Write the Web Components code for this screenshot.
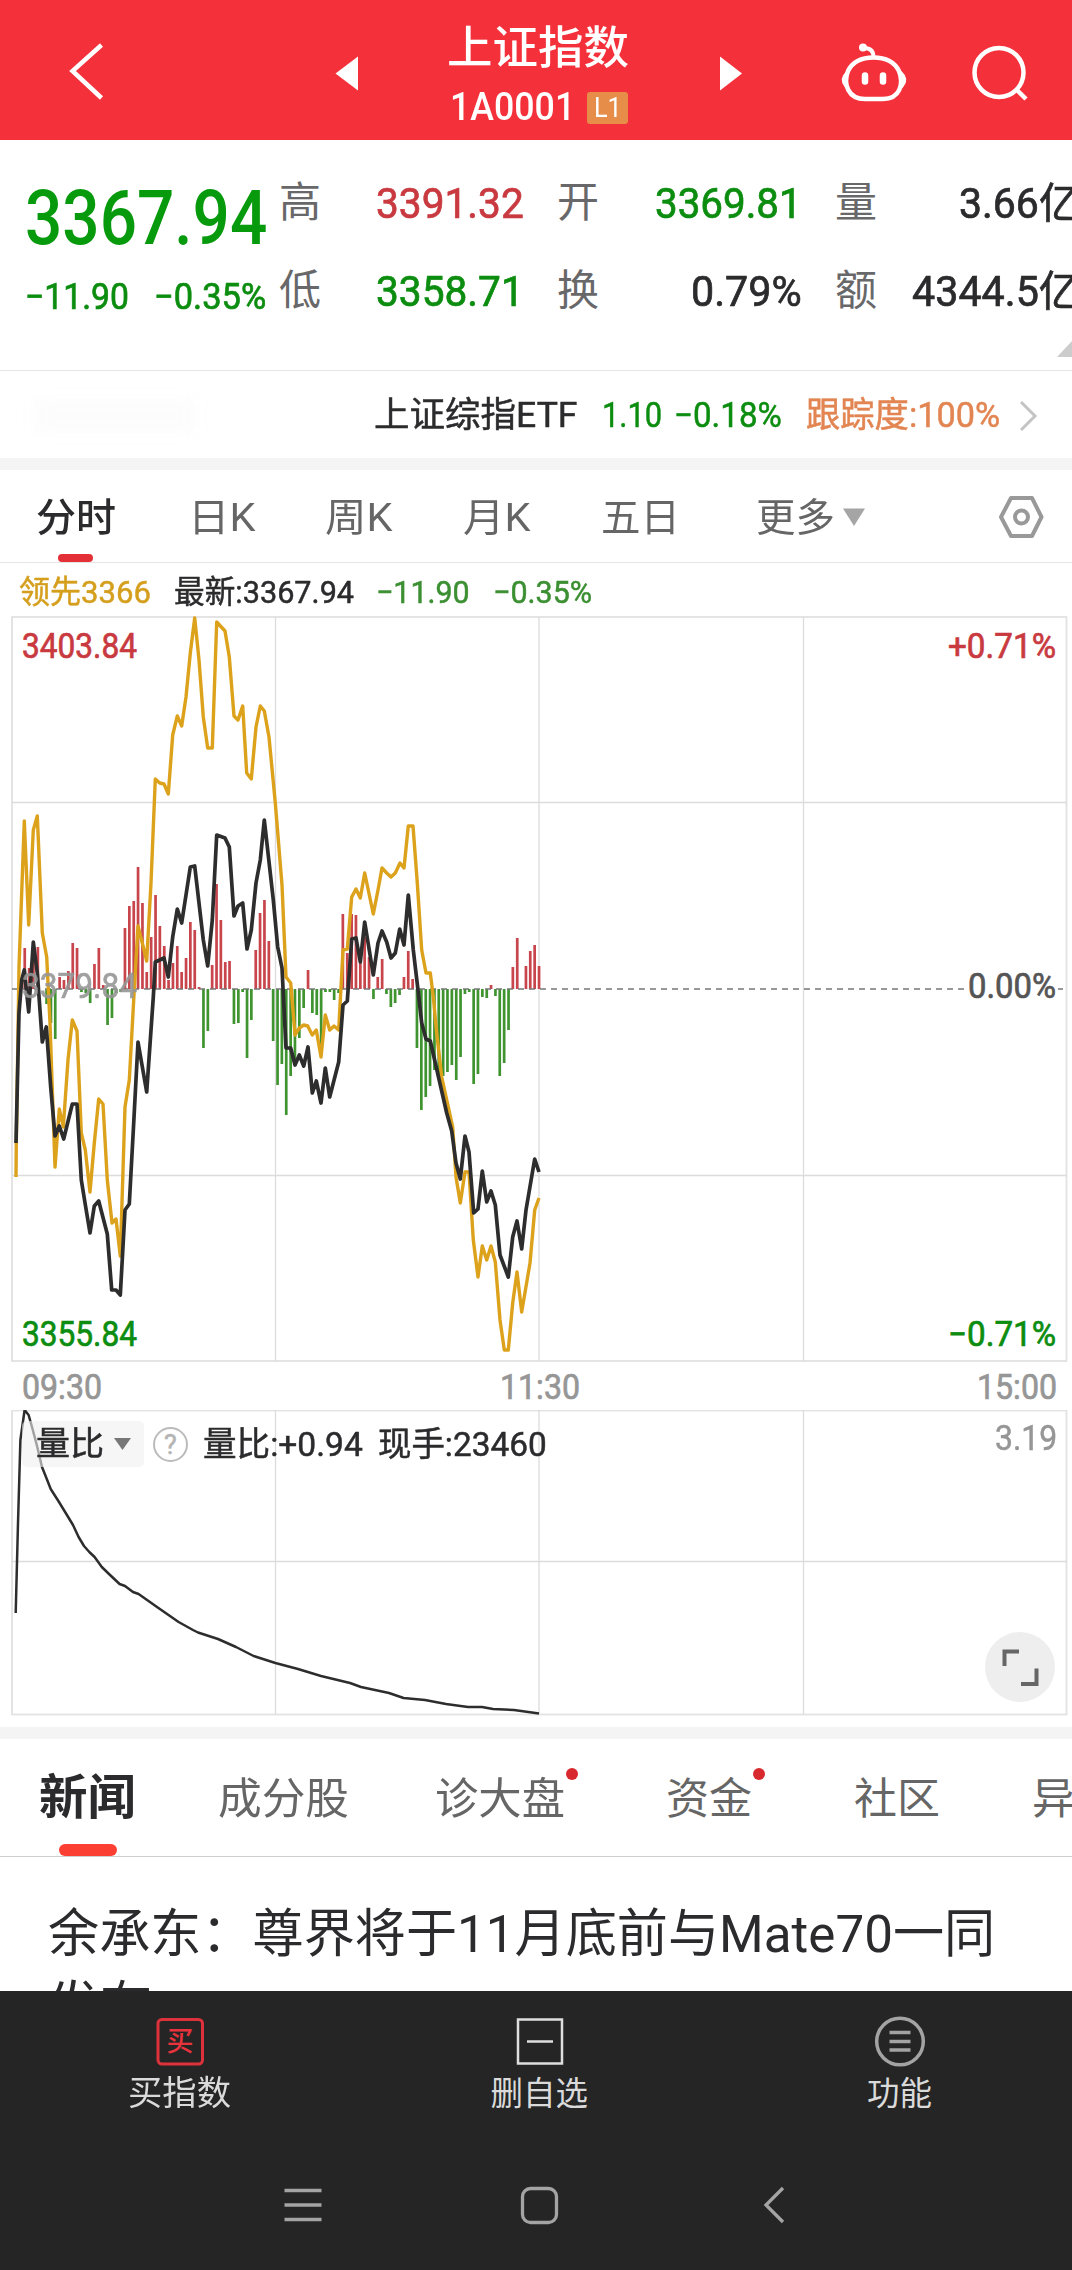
<!DOCTYPE html>
<html lang="zh-CN">
<head>
<meta charset="utf-8">
<title>上证指数 1A0001</title>
<style>
  body {
    margin: 0;
    width: 1072px;
    height: 2270px;
    overflow: hidden;
    background: #fff;
    color: #2b2b2d;
    font-family: Roboto, "Noto Sans CJK SC", sans-serif;
    --up: #c93a40;
    --down: #0c8d10;
    --grey: #666;
    --line: #e4e4e4;
  }
  stock-page { height: 2270px; }
</style>
</head>
<body>
<stock-page>
  <app-header name="上证指数" code="1A0001" level="L1"></app-header>
  <quote-panel></quote-panel>
  <etf-row></etf-row>
  <chart-tabs></chart-tabs>
  <chart-legend></chart-legend>
  <minute-chart></minute-chart>
  <ratio-chart></ratio-chart>
  <news-tabs></news-tabs>
  <news-item>
    <fit-text size="52" w="947" lh="74">余承东：尊界将于11月底前与Mate70一同</fit-text>
    <fit-text size="52" w="104" lh="70">发布</fit-text>
  </news-item>
  <bottom-bar slot="footer"></bottom-bar>
  <system-nav slot="footer"></system-nav>
</stock-page>

<script>
/**
 * Small base class, puts the markup of each element into its shadow root
 */
class BaseElement extends HTMLElement {
  constructor() {
    super();
    this.attachShadow({ mode: "open" });
  }

  connectedCallback() {
    this.shadowRoot.innerHTML = this.render();
  }
}

/**
 * One line of text squeezed or stretched to an exact width.
 * size = font size, w = width, lh = line height, all in px
 */
class FitText extends BaseElement {
  render() {
    const size = this.getAttribute("size");
    const w = this.getAttribute("w");
    const lh = this.getAttribute("lh") || Math.round(size * 1.2);
    return `
      <style>
        :host { display: block; flex: none; width: ${w}px; height: ${lh}px; }
        span {
          display: inline-block;
          font-size: ${size}px;
          line-height: ${lh}px;
          white-space: pre;
          transform-origin: 0 50%;
        }
      </style>
      <span><slot></slot></span>
    `;
  }

  connectedCallback() {
    super.connectedCallback();
    const span = this.shadowRoot.querySelector("span");
    const natural = span.offsetWidth;
    if (natural) {
      span.style.transform = `scaleX(${this.getAttribute("w") / natural})`;
    }
  }
}

class StockPage extends BaseElement {
  render() {
    return `
      <style>
        :host { display: flex; flex-direction: column; }
        main { height: 1991px; overflow: hidden; }
        footer { flex: 1; background: #252525; }
      </style>
      <main><slot></slot></main>
      <footer><slot name="footer"></slot></footer>
    `;
  }
}

class AppHeader extends BaseElement {
  render() {
    return `
      <style>
        :host { display: flex; height: 139.5px; background: #f4303a; color: #fff; }
        svg { display: block; flex: none; fill: none; stroke: #fff; }
        .title {
          width: 198px;
          display: flex;
          flex-direction: column;
          align-items: center;
          font-weight: 500;
          padding-top: 22px;
        }
        .code { display: flex; align-items: center; margin-top: 9px; gap: 12px; padding-left: 2px; }
        .level {
          display: flex;
          align-items: center;
          justify-content: center;
          width: 41px;
          height: 32px;
          border-radius: 3px;
          background: #e58d49;
          font-weight: 400;
        }
      </style>
      <svg width="439" height="139" stroke-width="4.5">
        <path d="M101.5 45 L72.5 71 L101.5 98"/>
        <path d="M358 56.5 V90.5 L335.5 73.5 Z" fill="#fff" stroke="none"/>
      </svg>
      <div class="title">
        <fit-text size="45" w="182" lh="54">${this.getAttribute("name")}</fit-text>
        <div class="code">
          <fit-text size="38" w="125" lh="45">${this.getAttribute("code")}</fit-text>
          <div class="level"><fit-text size="28" w="28" lh="32">${this.getAttribute("level")}</fit-text></div>
        </div>
      </div>
      <svg width="435" height="139" viewBox="638 0 435 139" stroke-width="4.5">
        <path d="M721 56.5 V90.5 L743 73.5 Z" fill="#fff" stroke="none"/>
        <path d="M874.5 57.5 C888 57.5 896 63 900 71 C905 84 901 99 884 99 H866 C849 99 844 84 849 71 C853 63 861 57.5 874.5 57.5 Z" stroke-width="4.5"/>
        <path d="M847.5 73 Q841 79 846.5 86 Z M902.5 73 Q909 79 903.5 86 Z" fill="#fff" stroke-width="2.5"/>
        <path d="M874.5 57 C874.5 51 871 48 865 48" stroke-width="4"/>
        <circle cx="864" cy="47.5" r="4" fill="#fff" stroke="none"/>
        <path d="M866 75.5 V81.5 M884 75.5 V81.5" stroke-width="6.5" stroke-linecap="round"/>
        <circle cx="1000" cy="72.5" r="24.5"/>
        <path d="M1017 89 L1027 99"/>
      </svg>
    `;
  }
}

class QuoteCell extends BaseElement {
  render() {
    return `
      <style>
        :host { display: flex; justify-content: space-between; width: 245px; height: 50px; }
        .label { color: #68686a; -webkit-text-stroke: 0; }
      </style>
      <fit-text class="label" size="42" w="42" lh="50">${this.getAttribute("label")}</fit-text>
      <fit-text size="42" w="${this.getAttribute("w")}" lh="52"><slot></slot></fit-text>
    `;
  }
}

class QuotePanel extends BaseElement {
  render() {
    return `
      <style>
        :host { display: flex; height: 230px; border-bottom: 1.5px solid var(--line); overflow: hidden; position: relative; }
        .price { width: 254px; padding: 34px 0 0 25px; color: #079a0c; font-weight: 500; flex: none; }
        .change { display: flex; gap: 25px; margin-top: 12px; color: var(--down); font-weight: 400; -webkit-text-stroke: 0.7px; }
        .cells {
          display: grid;
          grid-template-columns: repeat(3, 245px);
          column-gap: 33px;
          row-gap: 38px;
          align-content: start;
          padding-top: 38px;
          flex: none;
          -webkit-text-stroke: 0.7px;
        }
        .up { color: var(--up); }
        .down { color: var(--down); }
        svg { position: absolute; right: 0; bottom: 13px; }
      </style>
      <div class="price">
        <fit-text size="76" w="242" lh="89">3367.94</fit-text>
        <div class="change">
          <fit-text size="36" w="104" lh="44">−11.90</fit-text>
          <fit-text size="36" w="112" lh="44">−0.35%</fit-text>
        </div>
      </div>
      <div class="cells">
        <quote-cell label="高" w="148" class="up">3391.32</quote-cell>
        <quote-cell label="开" w="147" class="down">3369.81</quote-cell>
        <quote-cell label="量" w="121">3.66亿</quote-cell>
        <quote-cell label="低" w="148" class="down">3358.71</quote-cell>
        <quote-cell label="换" w="111">0.79%</quote-cell>
        <quote-cell label="额" w="168">4344.5亿</quote-cell>
      </div>
      <svg width="15" height="16"><path d="M15 0 V16 H0 Z" fill="#ccc"/></svg>
    `;
  }
}

class EtfRow extends BaseElement {
  render() {
    return `
      <style>
        :host {
          display: flex;
          align-items: center;
          height: 84px;
          padding-top: 3px;
          border-bottom: 12px solid #f4f4f5;
          font-weight: 400;
          -webkit-text-stroke: 0.5px;
        }
        .blank { width: 160px; height: 34px; margin: 0 179px 0 35px; background: #fcfcfc; filter: blur(8px); }
        .down { color: var(--down); }
        .track { color: #e28552; }
        svg { margin-left: 19px; }
      </style>
      <div class="blank"></div>
      <fit-text size="35" w="203">上证综指ETF</fit-text>
      <fit-text class="down" style="margin-left:25px" size="35" w="60">1.10</fit-text>
      <fit-text class="down" style="margin-left:12px" size="35" w="108">−0.18%</fit-text>
      <fit-text class="track" style="margin-left:24px" size="35" w="194">跟踪度:100%</fit-text>
      <svg width="19" height="32"><path d="M2 2 L16 16 L2 30" fill="none" stroke="#c4c4c4" stroke-width="3"/></svg>
    `;
  }
}

class ChartTabs extends BaseElement {
  render() {
    return `
      <style>
        :host { display: flex; height: 92.5px; border-bottom: 1.5px solid var(--line); color: var(--grey); }
        .tab { padding-top: 25px; flex: none; }
        .active { color: #2b2b2d; font-weight: 500; display: flex; flex-direction: column; align-items: center; }
        .active::after { content: ""; width: 35px; height: 9px; border-radius: 5px; background: #e23036; margin-top: 12px; margin-right: 2px; }
        svg { flex: none; }
      </style>
      <div class="tab active" style="margin-left:36px"><fit-text size="39" w="80">分时</fit-text></div>
      <div class="tab" style="margin-left:72px"><fit-text size="39" w="67">日K</fit-text></div>
      <div class="tab" style="margin-left:70px"><fit-text size="39" w="67">周K</fit-text></div>
      <div class="tab" style="margin-left:71px"><fit-text size="39" w="67">月K</fit-text></div>
      <div class="tab" style="margin-left:71px"><fit-text size="39" w="79">五日</fit-text></div>
      <div class="tab" style="margin-left:76px"><fit-text size="39" w="79">更多</fit-text></div>
      <svg style="margin:38px 0 0 8px" width="22" height="18"><path d="M0 0.5 H22 L11 18 Z" fill="#a5a5a5"/></svg>
      <svg style="margin:24px 0 0 133px" width="46" height="46" fill="none" stroke="#999" stroke-linejoin="round">
        <path d="M13 4 H34 L43.5 23 L34 42 H13 L3 23 Z" stroke-width="4"/>
        <circle cx="23.5" cy="23" r="6.5" stroke-width="4"/>
      </svg>
    `;
  }
}

class ChartLegend extends BaseElement {
  render() {
    return `
      <style>
        :host { display: flex; align-items: center; height: 53px; padding: 4px 0 0 19px; box-sizing: border-box; -webkit-text-stroke: 0.5px; }
        .lead { color: #d59f1e; }
        .down { color: #3c8f32; }
      </style>
      <fit-text class="lead" size="32" w="132">领先3366</fit-text>
      <fit-text style="margin-left:23px" size="32" w="180">最新:3367.94</fit-text>
      <fit-text class="down" style="margin-left:22px" size="32" w="94">−11.90</fit-text>
      <fit-text class="down" style="margin-left:23px" size="32" w="99">−0.35%</fit-text>
    `;
  }
}

// height of the bar of every minute, above (+) or below (-) the zero line
const BARS = [
  0, 0, 41, 21, 28, 42, 0, -15, -34, -50, 12, 9, 18, 46, 41, -3, -4, -14, 25, 41, 4,
  -36, -29, -4, -3, 61, 83, 88, 122, 86, 17, 52, 94, 63, 43, 9, 26, 43, 17, 31, 67,
  59, 2, -59, -42, 24, 105, 69, 27, 28, -35, -34, -3, -69, -31, 39, 76, 89, 48, -52, -96,
  -75, -126, -87, -75, -49, -19, 19, -24, -26, -58, -3, -3, -11, -4, 75, 36, 75, 74, 30, 52,
  32, -10, 12, 30, -5, -18, -14, -6, 12, 38, 10, -59, -121, -108, -97, -81, -89, -87, -83, -76,
  -91, -68, -5, -3, -95, -85, -8, -9, 4, -7, -87, -74, -41, 22, 51, 0, 23, 38, 44, 23
];

const LEAD_LINE = `16,1177 16.3,1143 19,967 24.3,821 28.7,925 33.3,830 37.3,816 42.3,933 46.7,957
  50,1023 55,1167 59.3,1109 63.3,1127 68,1060 72.3,1020 77,1031 81.3,1133 85.3,1150 90,1192
  94.3,1143 98.7,1099 103,1104 107.3,1180 112,1223 116,1219 120.3,1256 125,1107 129.3,1080
  133.7,1000 138,926 142.3,943 146.7,961 151,883 155.3,779 159.7,783 164,784 168.3,794
  172.7,735 177.3,716 181.7,726 186,697 190.3,653 194.7,618 199,660 203.3,717 207.7,748
  212.3,748 216.7,622 225,631 229.3,657 234,716 238,720 242.7,706 246.7,773 251.3,779
  256,727 260.3,706 264.3,711 269,737 275.3,803 282,885 286,977 290.7,983 295,1035 299.3,1028
  303.7,1025 307.7,1026 312.3,1035 316.3,1030 321,1057 325.3,1015 329.7,1030 334,1026
  338.7,1030 343,950 347.3,949 351.7,897 356,889 360.3,898 364.7,873 373.3,914 378,890
  382,868 386.7,873 391,877 395.3,873 400,863 404,868 408.3,826 413,826 417.3,883 421.7,950
  426,973 430.3,973 433.3,997 436.7,1033 441.7,1077 452.7,1127 456,1177 460.3,1203 465,1172
  469,1172 473.3,1240 478,1277 482.3,1246 486.7,1260 491,1246 495.3,1262 500,1320 504.3,1350
  508.3,1350 512.7,1303 517,1272 521.7,1312 530,1263 534.7,1210 539,1198`;

const PRICE_LINE = `16,1143 19,1013 21.7,980 24.3,970 28.7,1012 33.3,942 37.3,973 42.3,1042 46.3,1027
  50.7,1087 55,1136 59.3,1126 63.7,1139 72.3,1104 77,1104 81.3,1180 85.7,1207 90,1233
  94.3,1206 98.7,1201 107.3,1234 111.7,1290 116,1290 120.3,1295 125,1210 129.3,1204
  133.7,1123 138,1042 146.7,1092 153.3,997 155.3,962 164,958 168.3,977 172.7,937 177.3,909
  181.7,923 190.3,867 194.7,866 203.3,940 207.7,966 212.3,920 216.7,835 225,838 229.3,847
  234,916 238,906 242.7,903 247,949 251.3,930 256,883 260.3,860 264.3,820 273.3,900 277.7,947
  282,968 286,1048 290.7,1048 295,1065 299.3,1055 303.7,1066 308,1047 312.3,1093 316.3,1081
  321,1103 325.3,1068 329.7,1097 338.7,1062 343,1005 347.3,1001 351.7,939 356,938 360.3,962
  364.7,922 373.3,975 378,943 382,931 386.7,942 391,958 395.3,953 399.7,929 404,945 408.3,895
  413.3,950 418,990 421.7,1023 426,1039 430.3,1041 446.7,1113 451.7,1131 456,1163 460.3,1179
  465,1136 469,1152 473.7,1213 478,1209 482.3,1171 486.7,1202 491,1191 495.3,1205 500,1255
  508.3,1277 512.7,1237 517,1221 521.7,1249 526,1210 534.7,1159 539,1172`;

const RATIO_LINE = `15.7,1613 17.9,1527 20.4,1440 24.6,1410 28.6,1415 32,1427 36.8,1445 42,1467
  46.4,1478 50.7,1489 59,1502 73,1525 78.6,1537 84,1546 89.3,1552 94.6,1557 101.8,1567
  109,1574 119.6,1584 125,1586 133,1592 138.6,1594 157,1607 178.6,1622 193,1630 198,1632.5
  218,1639 236,1647 253.6,1656 275.4,1663 298,1669 321,1676 350,1683 361,1687 389,1693 403.6,1698
  425,1700 446,1704 468,1707 482,1707 493,1709 514,1710 539,1713.5`;

/**
 * Minute chart: price, leading index and strength bars
 */
class MinuteChart extends BaseElement {
  bars() {
    return BARS.map((value, i) => {
      if (!value) return "";
      const x = (16 + i * 4.358 - 1.3).toFixed(1);
      const y = value > 0 ? 989 - value : 989;
      const color = value > 0 ? "#c8454c" : "#3f9430";
      return `<rect x="${x}" y="${y}" width="2.7" height="${Math.abs(value)}" fill="${color}"/>`;
    }).join("");
  }

  render() {
    return `
      <style>
        :host { display: block; height: 794px; }
        svg { display: block; }
        text { font-size: 34.5px; font-weight: 400; stroke-width: 0.7px; }
        .up { fill: var(--up); stroke: var(--up); }
        .down { fill: var(--down); stroke: var(--down); }
        .dim { fill: #969696; stroke: #969696; }
      </style>
      <svg width="1072" height="794" viewBox="0 616 1072 794">
        <g fill="none" stroke="#dcdcdc" stroke-width="1.3">
          <rect x="12" y="617" width="1054.5" height="744" stroke="#e2e2e2" stroke-width="1.8"/>
          <path d="M275.5 617 V1361 M539 617 V1361 M803.5 617 V1361 M12 802.5 H1067 M12 1175.5 H1067"/>
        </g>
        ${this.bars()}
        <path d="M12 989 H1067" stroke="#777" stroke-width="1.5" stroke-dasharray="6 5"/>
        <g fill="none" stroke-linejoin="round">
          <polyline points="${LEAD_LINE}" stroke="#dda21c" stroke-width="3.4"/>
          <polyline points="${PRICE_LINE}" stroke="#2d2d2d" stroke-width="3.7"/>
        </g>
        <text class="up" x="22" y="658" textLength="115" lengthAdjust="spacingAndGlyphs">3403.84</text>
        <text class="dim" x="22" y="998" textLength="115" lengthAdjust="spacingAndGlyphs" opacity="0.9">3379.84</text>
        <text class="down" x="22" y="1346" textLength="115" lengthAdjust="spacingAndGlyphs">3355.84</text>
        <text class="up" x="948" y="658" textLength="108" lengthAdjust="spacingAndGlyphs">+0.71%</text>
        <rect x="966" y="974" width="92" height="27" fill="#fff"/>
        <text fill="#555" stroke="#555" x="968" y="998" textLength="88" lengthAdjust="spacingAndGlyphs">0.00%</text>
        <text class="down" x="948" y="1346" textLength="108" lengthAdjust="spacingAndGlyphs">−0.71%</text>
        <text class="dim" x="22" y="1399" textLength="80" lengthAdjust="spacingAndGlyphs">09:30</text>
        <text class="dim" x="500" y="1399" textLength="80" lengthAdjust="spacingAndGlyphs">11:30</text>
        <text class="dim" x="977" y="1399" textLength="80" lengthAdjust="spacingAndGlyphs">15:00</text>
      </svg>
    `;
  }
}

/**
 * Volume ratio chart with its picker lying over the curve
 */
class RatioChart extends BaseElement {
  render() {
    return `
      <style>
        :host { display: block; position: relative; height: 317px; border-bottom: 12px solid #f4f4f5; }
        svg { display: block; }
        .bar {
          position: absolute;
          left: 22px;
          top: 11px;
          display: flex;
          align-items: center;
          height: 46px;
          -webkit-text-stroke: 0.5px;
        }
        .picker {
          display: flex;
          align-items: center;
          gap: 10px;
          width: 108px;
          height: 46px;
          padding-left: 14px;
          border-radius: 5px;
          background: rgba(240, 240, 240, 0.6);
        }
        .help {
          width: 31px;
          height: 31px;
          margin: 0 15px 0 9px;
          border: 2.5px solid #bbb;
          border-radius: 50%;
          color: #b4b4b4;
          font-size: 27px;
          line-height: 32px;
          text-align: center;
        }
        .max { position: absolute; right: 15px; top: 8px; color: #969696; -webkit-text-stroke: 0.5px; }
        .expand { position: absolute; right: 17px; top: 222px; }
      </style>
      <svg width="1072" height="317" viewBox="0 1410 1072 317">
        <g fill="none" stroke="#dcdcdc" stroke-width="1.3">
          <rect x="12" y="1410.5" width="1054.5" height="304" stroke="#e2e2e2" stroke-width="1.8"/>
          <path d="M275.5 1410 V1714 M539 1410 V1714 M803.5 1410 V1714 M12 1561.5 H1067"/>
        </g>
        <polyline points="${RATIO_LINE}" fill="none" stroke="#2d2d2d" stroke-width="2.5" stroke-linejoin="round"/>
      </svg>
      <div class="bar">
        <div class="picker">
          <fit-text size="33" w="68">量比</fit-text>
          <svg width="17" height="12"><path d="M0 0 H17 L8.5 12 Z" fill="#777"/></svg>
        </div>
        <div class="help">?</div>
        <fit-text size="34" w="160">量比:+0.94</fit-text>
        <fit-text style="margin-left:15px" size="34" w="169">现手:23460</fit-text>
      </div>
      <fit-text class="max" size="34.5" w="62">3.19</fit-text>
      <svg class="expand" width="70" height="70">
        <circle cx="35" cy="35" r="35" fill="#eee"/>
        <path d="M34 19.5 H19.5 V34 M36 52 H51.5 V36.5" fill="none" stroke="#666" stroke-width="4"/>
      </svg>
    `;
  }
}

class NewsTabs extends BaseElement {
  render() {
    return `
      <style>
        :host { display: flex; height: 116.5px; border-bottom: 1.5px solid #cfcfcf; color: var(--grey); overflow: hidden; }
        .tab { position: relative; padding-top: 34px; flex: none; }
        .active { color: #2b2b2d; font-weight: 700; display: flex; flex-direction: column; align-items: center; padding-top: 30px; }
        .active::after { content: ""; width: 58px; height: 12px; border-radius: 6px; background: #fb3f33; margin-top: 17.5px; }
        .dot::after { content: ""; position: absolute; right: -13px; top: 29px; width: 12px; height: 12px; border-radius: 50%; background: #d8292f; }
      </style>
      <div class="tab active" style="margin-left:39px"><fit-text size="48" w="97" lh="57">新闻</fit-text></div>
      <div class="tab" style="margin-left:82px"><fit-text size="43" w="131">成分股</fit-text></div>
      <div class="tab dot" style="margin-left:86px"><fit-text size="43" w="130">诊大盘</fit-text></div>
      <div class="tab dot" style="margin-left:101px"><fit-text size="43" w="86">资金</fit-text></div>
      <div class="tab" style="margin-left:102px"><fit-text size="43" w="86">社区</fit-text></div>
      <div class="tab" style="margin-left:92px"><fit-text size="43" w="86">异动</fit-text></div>
    `;
  }
}

class NewsItem extends BaseElement {
  render() {
    return `
      <style>
        :host { display: block; padding: 41px 48px 0; }
      </style>
      <slot></slot>
    `;
  }
}

class BottomBar extends BaseElement {
  render() {
    return `
      <style>
        :host { display: flex; justify-content: center; gap: 216px; padding-top: 25px; height: 125px; color: #dadada; }
        div { display: flex; flex-direction: column; align-items: center; width: 144px; }
        svg { display: block; margin-bottom: 7px; overflow: visible; }
      </style>
      <div>
        <svg width="50" height="50" viewBox="0 0 50 50">
          <rect x="3" y="3.5" width="44.5" height="44.5" rx="4" fill="none" stroke="#dd323b" stroke-width="3"/>
          <text x="25" y="35" font-size="27" font-weight="500" text-anchor="middle" fill="#e8333d">买</text>
        </svg>
        <fit-text size="34" w="103">买指数</fit-text>
      </div>
      <div>
        <svg width="50" height="50" viewBox="0 0 50 50" fill="none" stroke="#dedede" stroke-width="2.5">
          <path d="M3 3.5 H47 V47.5 H3 Z M12 25.5 H38"/>
        </svg>
        <fit-text size="32.5" w="98" lh="43">删自选</fit-text>
      </div>
      <div>
        <svg width="50" height="50" viewBox="0 0 50 50" fill="none" stroke="#a3a3a3" stroke-width="3.5">
          <circle cx="25" cy="25.5" r="23.3"/>
          <path d="M14.5 16.5 H35.5 M14.5 25.5 H35.5 M14.5 34 H35.5"/>
        </svg>
        <fit-text size="32.5" w="65" lh="43">功能</fit-text>
      </div>
    `;
  }

  connectedCallback() {
    super.connectedCallback();
    this.style.paddingLeft = "7px";
  }
}

class SystemNav extends BaseElement {
  render() {
    return `
      <style>
        :host { display: flex; justify-content: center; gap: 196px; padding: 44px 0 0 6px; }
        svg { fill: none; stroke: #a4a4a4; stroke-width: 3.3; }
      </style>
      <svg width="40" height="40"><path d="M1.5 5.5 H38.5 M1.5 20 H38.5 M1.5 34.5 H38.5"/></svg>
      <svg width="40" height="40"><rect x="3.5" y="3.5" width="34" height="34" rx="8"/></svg>
      <svg width="40" height="40"><path d="M28 3 L11 20 L28 37"/></svg>
    `;
  }
}

customElements.define("fit-text", FitText);
customElements.define("stock-page", StockPage);
customElements.define("app-header", AppHeader);
customElements.define("quote-cell", QuoteCell);
customElements.define("quote-panel", QuotePanel);
customElements.define("etf-row", EtfRow);
customElements.define("chart-tabs", ChartTabs);
customElements.define("chart-legend", ChartLegend);
customElements.define("minute-chart", MinuteChart);
customElements.define("ratio-chart", RatioChart);
customElements.define("news-tabs", NewsTabs);
customElements.define("news-item", NewsItem);
customElements.define("bottom-bar", BottomBar);
customElements.define("system-nav", SystemNav);
</script>
</body>
</html>
